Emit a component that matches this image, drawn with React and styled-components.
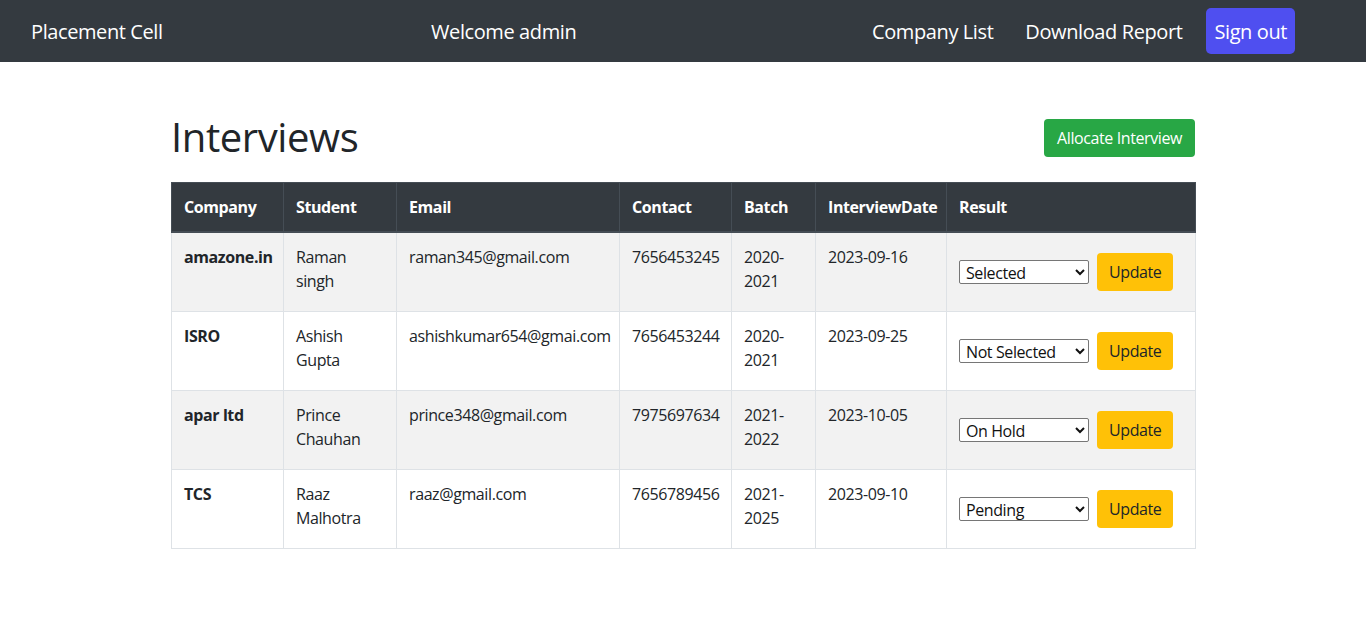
import styled, { createGlobalStyle } from 'styled-components';

const GlobalStyle = createGlobalStyle`
    body {
        margin: 0;
        font-family: "Open Sans", "Noto Sans", sans-serif;
        letter-spacing: -0.025em;
        color: #212529;
        background: #ffffff;
        font-size: 16px;
        line-height: 1.5;
    }
`

const Navbar = styled.nav`
    display: flex;
    align-items: center;
    height: 62px;
    padding: 0 71px 0 31px;
    background-color: #343a40;
    color: white;
    font-size: 20px;
`

const Brand = styled.div`
    width: 129px;
    white-space: nowrap;
    padding-top: 2px;
`

const Welcome = styled.div`
    margin-left: 271px;
    white-space: nowrap;
    padding-top: 2px;
`

const NavRight = styled.div`
    display: flex;
    align-items: center;
    margin-left: auto;
`

const NavLink = styled.a`
    color: white;
    text-decoration: none;
    padding: 2px 16px 0;
    white-space: nowrap;
`

const SignOut = styled.button`
    margin-left: 8px;
    height: 46px;
    padding: 0 8px;
    border: none;
    border-radius: 5px;
    background-color: #4f4ff0;
    color: white;
    font-family: inherit;
    letter-spacing: inherit;
    font-size: 20px;
`

const Main = styled.main`
    width: 1024px;
    margin: 0 auto;
    padding-top: 51px;
`

const TitleRow = styled.div`
    display: flex;
    justify-content: space-between;
    align-items: center;
    height: 48px;
    margin-bottom: 21px;
`

const Title = styled.h1`
    margin: 0;
    font-size: 40px;
    font-weight: 500;
    letter-spacing: -0.01em;
    line-height: 1.2;
`

const Allocate = styled.button`
    height: 38px;
    margin-top: 1px;
    padding: 0 13px;
    border: none;
    border-radius: 4px;
    background-color: #28a745;
    color: white;
    font-family: inherit;
    letter-spacing: inherit;
    font-size: 16px;
`

const Table = styled.table`
    width: 100%;
    border-collapse: collapse;
    table-layout: fixed;
`

const Th = styled.th`
    box-sizing: border-box;
    width: ${p => p.w}px;
    padding: 12px;
    text-align: left;
    font-weight: 700;
    background-color: #343a40;
    color: white;
    border: 1px solid #454d55;
    border-bottom-width: 2px;
    white-space: nowrap;
`

const Tr = styled.tr`
    background-color: ${p => p.striped ? '#f2f2f2' : '#ffffff'};
`

const Td = styled.td`
    padding: 12px;
    vertical-align: top;
    border: 1px solid #dee2e6;
    font-weight: ${p => p.bold ? 700 : 400};
    white-space: nowrap;
`

const ResultForm = styled.div`
    display: flex;
    align-items: center;
`

const Select = styled.select`
    width: 130px;
    height: 24px;
    padding: 0 2px;
    border: 1px solid #767676;
    border-radius: 2px;
    background: white;
    color: #111;
    font-family: inherit;
    letter-spacing: inherit;
    font-size: 16px;
`

const Update = styled.button`
    margin: 8px;
    height: 38px;
    padding: 0 12px;
    border: none;
    border-radius: 4px;
    background-color: #ffc107;
    color: #212529;
    font-family: inherit;
    letter-spacing: inherit;
    font-size: 16px;
`

const columns = [
    ['Company', 112], ['Student', 113], ['Email', 223], ['Contact', 112],
    ['Batch', 84], ['InterviewDate', 131], ['Result', 249],
]

const rows = [
    { company: 'amazone.in', student: ['Raman', 'singh'], email: 'raman345@gmail.com', contact: '7656453245', batch: '2020-2021', date: '2023-09-16', result: 'Selected' },
    { company: 'ISRO', student: ['Ashish', 'Gupta'], email: 'ashishkumar654@gmai.com', contact: '7656453244', batch: '2020-2021', date: '2023-09-25', result: 'Not Selected' },
    { company: 'apar ltd', student: ['Prince', 'Chauhan'], email: 'prince348@gmail.com', contact: '7975697634', batch: '2021-2022', date: '2023-10-05', result: 'On Hold' },
    { company: 'TCS', student: ['Raaz', 'Malhotra'], email: 'raaz@gmail.com', contact: '7656789456', batch: '2021-2025', date: '2023-09-10', result: 'Pending' },
]

const App = () => {
    return (
    <>
    <GlobalStyle />
    <Navbar>
        <Brand>Placement Cell</Brand>
        <Welcome>Welcome admin</Welcome>
        <NavRight>
            <NavLink href="#">Company List</NavLink>
            <NavLink href="#">Download Report</NavLink>
            <SignOut>Sign out</SignOut>
        </NavRight>
    </Navbar>
    <Main>
        <TitleRow>
            <Title>Interviews</Title>
            <Allocate>Allocate Interview</Allocate>
        </TitleRow>
        <Table>
            <thead>
                <tr>
                    {columns.map(([name, w]) => <Th key={name} w={w}>{name}</Th>)}
                </tr>
            </thead>
            <tbody>
                {rows.map((r, i) => (
                    <Tr key={r.company} striped={i % 2 === 0}>
                        <Td bold>{r.company}</Td>
                        <Td>{r.student[0]}<br />{r.student[1]}</Td>
                        <Td>{r.email}</Td>
                        <Td>{r.contact}</Td>
                        <Td>{r.batch.slice(0, 5)}<br />{r.batch.slice(5)}</Td>
                        <Td>{r.date}</Td>
                        <Td>
                            <ResultForm>
                                <Select defaultValue={r.result}>
                                    <option>Selected</option>
                                    <option>Not Selected</option>
                                    <option>On Hold</option>
                                    <option>Pending</option>
                                </Select>
                                <Update>Update</Update>
                            </ResultForm>
                        </Td>
                    </Tr>
                ))}
            </tbody>
        </Table>
    </Main>
    </>
    )
}

export default App
